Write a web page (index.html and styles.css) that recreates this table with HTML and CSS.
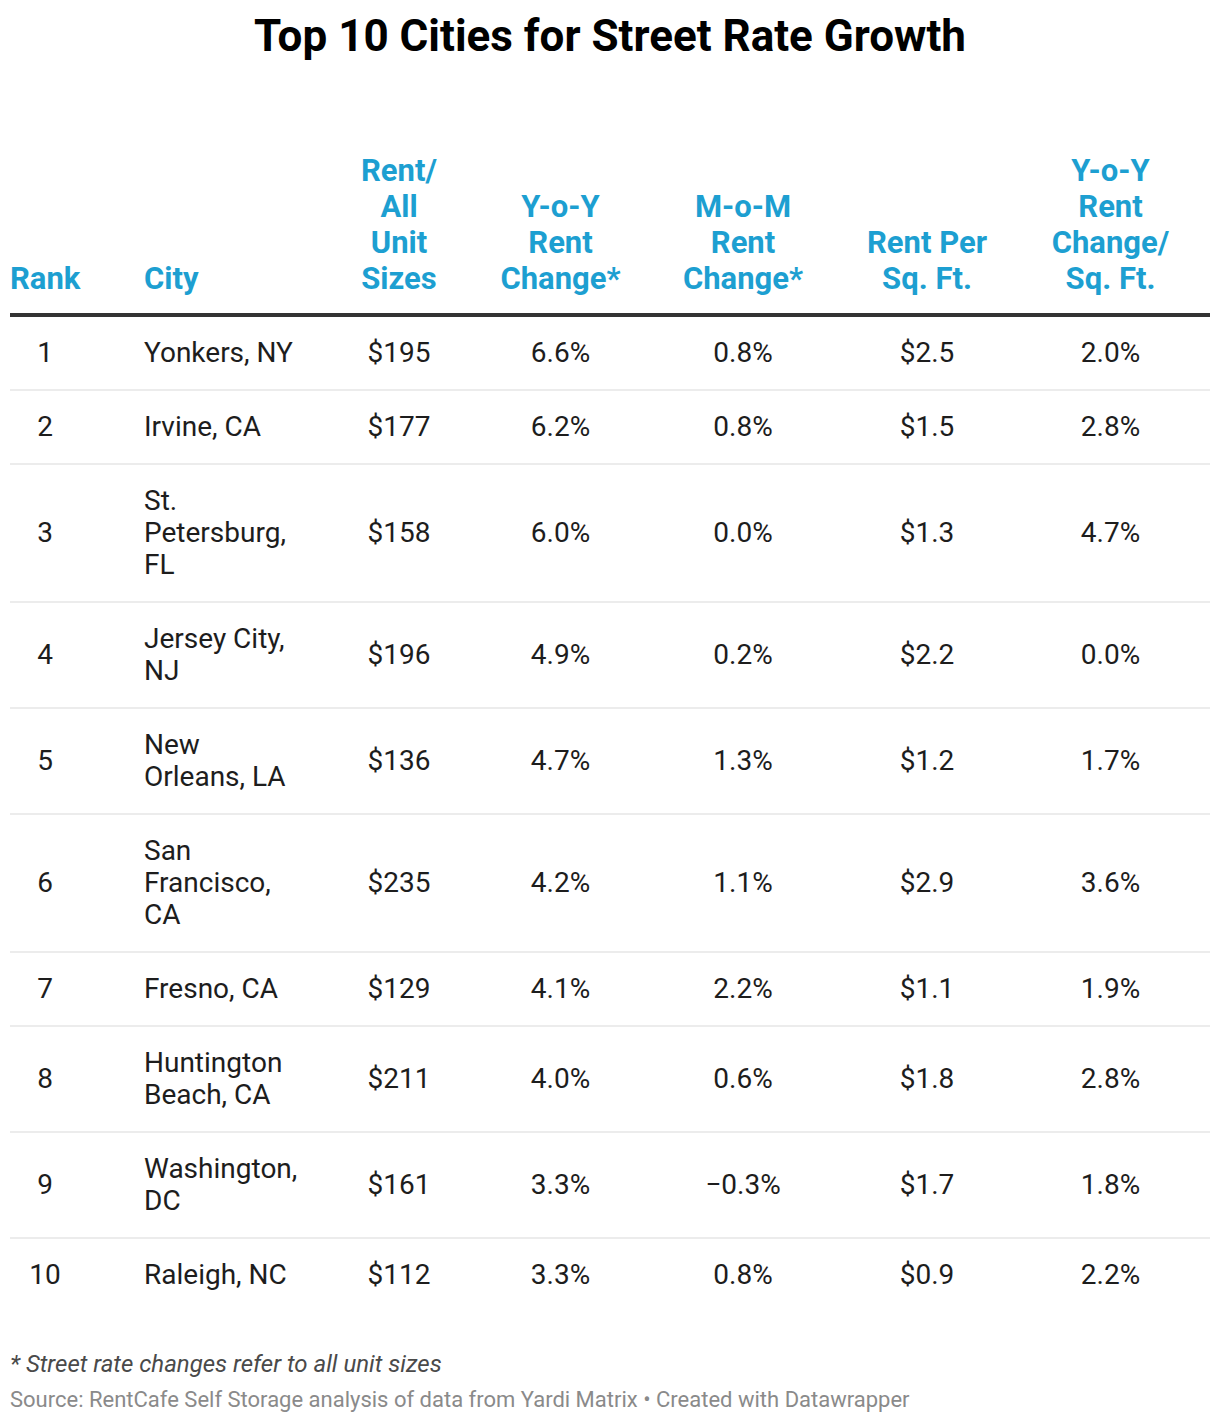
FILE: index.html
```html
<!DOCTYPE html>
<html lang="en">
<head>
<meta charset="utf-8">
<title>Top 10 Cities for Street Rate Growth</title>
<link rel="stylesheet" href="styles.css">
</head>
<body>
<div class="chart">
  <h1 class="title">Top 10 Cities for Street Rate Growth</h1>
  <table class="data">
    <colgroup>
      <col class="c-rank"><col class="c-city"><col class="c-rent"><col class="c-yoy"><col class="c-mom"><col class="c-sqft"><col class="c-yoysq">
    </colgroup>
    <thead>
      <tr>
        <th class="rank">Rank</th>
        <th class="city">City</th>
        <th class="rent">Rent/ All Unit Sizes</th>
        <th>Y-o-Y Rent Change*</th>
        <th>M-o-M Rent Change*</th>
        <th>Rent Per Sq. Ft.</th>
        <th class="last">Y-o-Y Rent Change/ Sq. Ft.</th>
      </tr>
    </thead>
    <tbody>
      <tr><td class="rank">1</td><td class="city">Yonkers, NY</td><td class="rent">$195</td><td>6.6%</td><td>0.8%</td><td>$2.5</td><td class="last">2.0%</td></tr>
      <tr><td class="rank">2</td><td class="city">Irvine, CA</td><td class="rent">$177</td><td>6.2%</td><td>0.8%</td><td>$1.5</td><td class="last">2.8%</td></tr>
      <tr><td class="rank">3</td><td class="city">St. Petersburg, FL</td><td class="rent">$158</td><td>6.0%</td><td>0.0%</td><td>$1.3</td><td class="last">4.7%</td></tr>
      <tr><td class="rank">4</td><td class="city">Jersey City, NJ</td><td class="rent">$196</td><td>4.9%</td><td>0.2%</td><td>$2.2</td><td class="last">0.0%</td></tr>
      <tr><td class="rank">5</td><td class="city">New Orleans, LA</td><td class="rent">$136</td><td>4.7%</td><td>1.3%</td><td>$1.2</td><td class="last">1.7%</td></tr>
      <tr><td class="rank">6</td><td class="city">San Francisco, CA</td><td class="rent">$235</td><td>4.2%</td><td>1.1%</td><td>$2.9</td><td class="last">3.6%</td></tr>
      <tr><td class="rank">7</td><td class="city">Fresno, CA</td><td class="rent">$129</td><td>4.1%</td><td>2.2%</td><td>$1.1</td><td class="last">1.9%</td></tr>
      <tr><td class="rank">8</td><td class="city">Huntington Beach, CA</td><td class="rent">$211</td><td>4.0%</td><td>0.6%</td><td>$1.8</td><td class="last">2.8%</td></tr>
      <tr><td class="rank">9</td><td class="city">Washington, DC</td><td class="rent">$161</td><td>3.3%</td><td>&minus;0.3%</td><td>$1.7</td><td class="last">1.8%</td></tr>
      <tr><td class="rank">10</td><td class="city">Raleigh, NC</td><td class="rent">$112</td><td>3.3%</td><td>0.8%</td><td>$0.9</td><td class="last">2.2%</td></tr>
    </tbody>
  </table>
  <div class="notes">
    <p class="note">* Street rate changes refer to all unit sizes</p>
    <p class="source">Source: RentCafe Self Storage analysis of data from Yardi Matrix • Created with Datawrapper</p>
  </div>
</div>
</body>
</html>
```
FILE: styles.css
```css
html, body {
  margin: 0;
  padding: 0;
  background: #ffffff;
}
body {
  font-family: Roboto, "Liberation Sans", sans-serif;
  color: #1d1d1d;
}
.chart {
  padding: 10px 10px 0 10px;
}
.title {
  margin: 0;
  font-size: 44px;
  font-weight: 700;
  line-height: 52px;
  text-align: center;
  color: #000;
}
.data {
  margin-top: 91px;
  width: 1200px;
  border-collapse: collapse;
  table-layout: fixed;
}
.c-rank { width: 70px; }
.c-city { width: 248px; }
.c-rent { width: 142px; }
.c-yoy { width: 181px; }
.c-mom { width: 184px; }
.c-sqft { width: 184px; }
.c-yoysq { width: 191px; }

th {
  font-size: 31px;
  font-weight: 700;
  line-height: 36px;
  color: #1d9fd1;
  text-align: center;
  vertical-align: bottom;
  padding: 0 24px 16px 24px;
  border-bottom: 4px solid #333333;
}
td {
  font-size: 28px;
  line-height: 32px;
  text-align: center;
  vertical-align: middle;
  padding: 20px 24px;
  border-bottom: 2px solid #ececec;
}
tbody tr:last-child td {
  border-bottom: none;
}
th.rank {
  text-align: left;
  padding-left: 0;
  padding-right: 0;
}
td.rank {
  padding-left: 0;
  padding-right: 0;
}
.city {
  text-align: left;
  padding-left: 64px;
  padding-right: 26px;
}
.rent {
  padding-left: 26px;
  padding-right: 26px;
}
.last {
  padding-left: 25px;
  padding-right: 33px;
}
.notes {
  margin-top: 35px;
}
.notes p {
  margin: 0;
}
.note {
  font-size: 24px;
  font-style: italic;
  line-height: 36px;
  color: #4a4a4a;
}
.source {
  font-size: 22px;
  line-height: 36px;
  color: #8a8a8a;
}
```
